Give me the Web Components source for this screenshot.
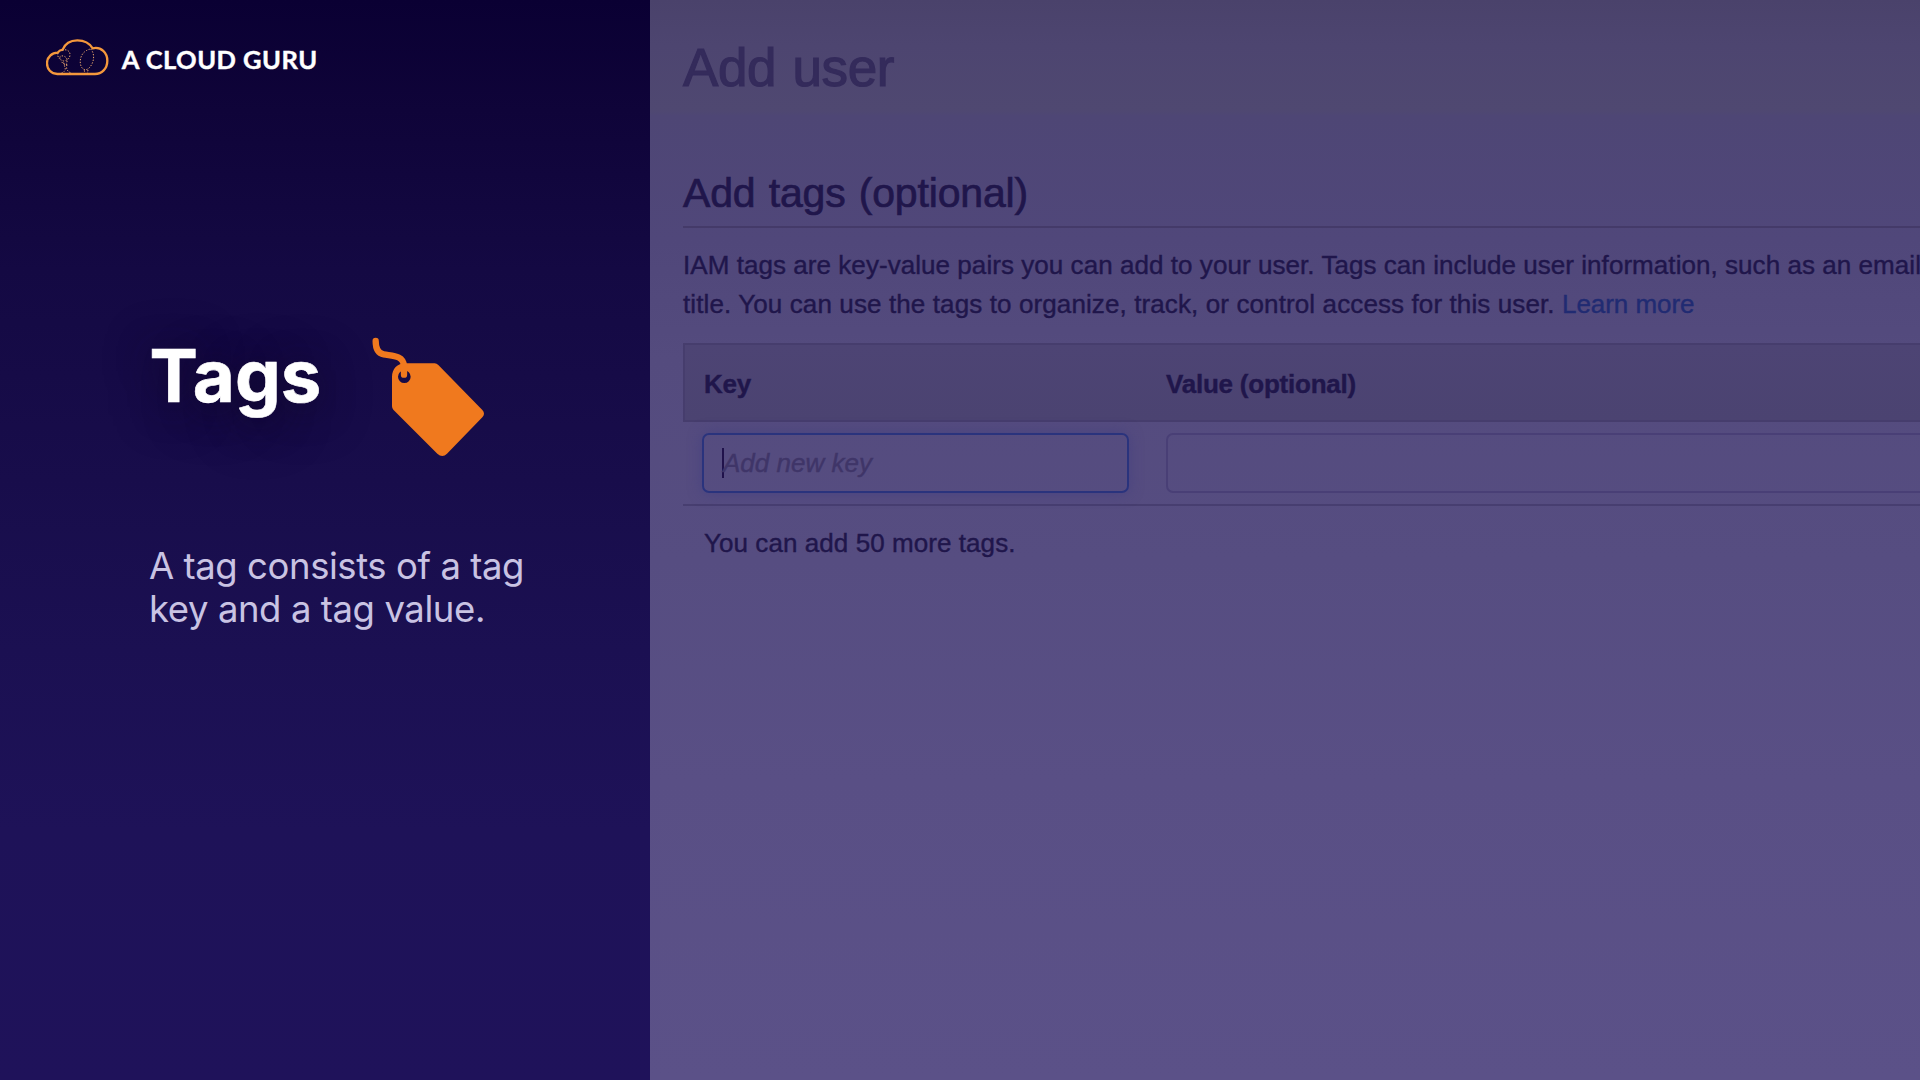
<!DOCTYPE html>
<html lang="en">
<head>
<meta charset="utf-8">
<title>Tags</title>
<style>
html,body{margin:0;height:100%;overflow:hidden;background:#150b46}
body{font-family:"Liberation Sans",Arial,sans-serif}
</style>
</head>
<body>
<lesson-slide>
  <lesson-panel slot="panel">
    <brand-logo slot="brand">A CLOUD GURU</brand-logo>
    <span slot="title"><text-line fit="172">Tags</text-line></span>
    <tag-icon slot="icon"></tag-icon>
    <text-line slot="copy" fit="375">A tag consists of a tag</text-line>
    <text-line slot="copy" fit="336">key and a tag value.</text-line>
  </lesson-panel>
  <user-console slot="stage"></user-console>
</lesson-slide>
<script>
/* A single line whose tracking is adjusted so that it spans `fit` pixels. */
class TextLine extends HTMLElement {
  connectedCallback() {
    if (this.shadowRoot) return;
    this.attachShadow({mode: 'open'}).innerHTML =
      '<style>:host{display:block;white-space:pre}span{display:inline-block}</style><span><slot></slot></span>';
    requestAnimationFrame(() => this.fit());
    this.fit();
  }
  fit() {
    const span = this.shadowRoot.querySelector('span');
    const want = parseFloat(this.getAttribute('fit'));
    const n = this.textContent.length;
    if (!want || !n) return;
    span.style.letterSpacing = '0px';
    const have = span.getBoundingClientRect().width;
    if (have) span.style.letterSpacing = ((want - have) / n).toFixed(3) + 'px';
  }
}

class LessonSlide extends HTMLElement {
  constructor() {
    super();
    this.attachShadow({mode: 'open'}).innerHTML = `
      <style>
        :host{display:grid;grid-template-columns:650px 1270px;width:1920px;height:1080px;overflow:hidden}
      </style>
      <slot name="panel"></slot><slot name="stage"></slot>`;
  }
}

class LessonPanel extends HTMLElement {
  constructor() {
    super();
    this.attachShadow({mode: 'open'}).innerHTML = `
      <style>
        :host{display:flex;flex-direction:column;box-sizing:border-box;height:1080px;
          background:linear-gradient(180deg,#0a0033 0,#0f0439 110px,#140943 270px,#180d4b 480px,#1b1052 650px,#1e1258 830px,#1f125a 1080px);
          font-family:Inter,"Liberation Sans",sans-serif}
        header{height:334px;padding:39px 0 0 46px;box-sizing:border-box}
        .head{display:flex;height:210px;padding-left:149px}
        .title{width:222px;margin-top:-2px;padding-left:.5px;box-sizing:border-box;font-weight:700;font-size:72.5px;line-height:88px;color:#fff;-webkit-text-stroke:.6px #fff;
          text-shadow:0 5px 34px rgba(20,10,42,.6),0 7px 50px rgba(20,10,42,.5)}
        .copy{padding:1px 0 0 149px;font-size:36.5px;line-height:43px;color:#c9c3e3}
      </style>
      <header><slot name="brand"></slot></header>
      <div class="head"><div class="title"><slot name="title"></slot></div><slot name="icon"></slot></div>
      <div class="copy"><slot name="copy"></slot></div>`;
  }
}

class BrandLogo extends HTMLElement {
  connectedCallback() {
    const name = this.textContent.trim();
    this.attachShadow({mode: 'open'}).innerHTML = `
      <style>
        :host{display:flex;align-items:flex-start;gap:13px;font:700 25.5px/38px Lato,"Liberation Sans",sans-serif;color:#fff;-webkit-text-stroke:.4px #fff}
        svg{display:block}
        text-line{margin-top:1px}
      </style>
      <svg width="62.67" height="36.67" viewBox="48 56 188 110" fill="none" stroke="#f4983c">
        <path stroke-width="7" stroke-linejoin="round" d="M82 161C63 161 51 146 51 129C51 110 66 97 83 97C87 91 92 89 98 88C105 70 122 60 142 60C162 60 179 69 188 84C214 78 232 98 232 121C232 145 215 161 195 161Z"/>
        <g stroke-width="3" stroke-dasharray="4 4.5" stroke="#eaa66c">
          <path d="M182 86C195 100 193 124 180 140C171 151 162 151 155 141C147 128 151 106 162 96Q171 88 182 86Z"/>
          <path d="M163 150L164 159M174 149L172 159"/>
          <path d="M97 91C108 84 121 92 120 104C119 115 112 120 101 122C94 120 88 115 90 109C98 103 109 109 112 118L109 134C101 132 95 127 93 120M84 98C81 107 86 114 93 119M111 133C107 145 112 155 126 159M101 127L106 146Q105 154 94 159"/>
        </g>
      </svg>
      <text-line fit="196">${name}</text-line>`;
  }
}

class TagIcon extends HTMLElement {
  constructor() {
    super();
    this.attachShadow({mode: 'open'}).innerHTML = `
      <style>:host{display:block;width:115px;height:121px}svg{display:block}</style>
      <svg width="113" height="122" viewBox="93 42 339 366" fill="none">
        <path fill="#f0791e" fill-rule="evenodd" d="M196 130H284Q290 130 295 135L427 270Q437 281 427 292L321 401Q307 415 292 401L160 269Q156 265 156 259V171C156 147 172 130 196 130ZM174 170A19 19 0 1 0 212 170A19 19 0 1 0 174 170Z"/>
        <path stroke="#f0791e" stroke-width="19" stroke-linecap="round" d="M107 63C107 86 113 100 131 103C156 108 189 105 192 137V164"/>
      </svg>`;
  }
}

class KeyField extends HTMLElement {
  constructor() {
    super();
    this.attachShadow({mode: 'open'}).innerHTML = `
      <style>
        :host{display:flex;align-items:center;box-sizing:border-box;height:60px;border:2px solid #493f76;border-radius:7px;padding-left:18px;
          font:italic 26px/36px "Liberation Sans",sans-serif;color:#3f3568}
        :host([focused]){border-color:#2a337d;box-shadow:0 0 14px rgba(64,60,128,.6)}
        i{display:none;width:2px;height:30px;background:#20124b;margin-right:-1px}
        :host([focused]) i{display:block}
      </style><i></i><slot></slot>`;
  }
}

class UserConsole extends HTMLElement {
  constructor() {
    super();
    this.attachShadow({mode: 'open'}).innerHTML = `
      <style>
        :host{display:block;box-sizing:border-box;height:1080px;overflow:hidden;padding:33px 0 0 33px;color:#20164b;-webkit-text-stroke:.4px;
          font:26px/39px "Liberation Sans",Arial,sans-serif;
          background:linear-gradient(180deg,#4a426b 0,#4d4570 45px,#4f4871 110px,#4e4675 116px,#50477a 240px,#544b7e 360px,#564d81 560px,#594f85 780px,#5b5188 1080px)}
        h1,h2{margin:0;font-weight:400}
        h1{font-size:53px;line-height:70px;color:#342b5b;-webkit-text-stroke:1.2px #342b5b;word-spacing:2px}
        h2{font-size:41px;line-height:50px;padding:65px 0 8px;border-bottom:2px solid #443a69;-webkit-text-stroke:.7px;word-spacing:2px}
        .intro{padding:18px 0 19px}
        .row{display:flex}
        .link{color:#212b72}
        .table{border-bottom:2px solid #473e70}
        .thead,.fields{display:grid}
        .thead{grid-template-columns:462px 1fr;box-sizing:border-box;height:79px;border:2px solid #463d6d;border-right:0;
          background:linear-gradient(#4d4474,#4b4371);font-weight:700;line-height:78px;padding-left:19px}
        .fields{grid-template-columns:427px 1fr;gap:37px;padding:11px 0 11px 19px}
        .fields key-field:last-child{width:800px}
        .note{padding:18px 0 0 21px}
      </style>
      <h1><text-line fit="211">Add user</text-line></h1>
      <h2><text-line fit="345">Add tags (optional)</text-line></h2>
      <div class="intro">
        <text-line fit="1238">IAM tags are key-value pairs you can add to your user. Tags can include user information, such as an email</text-line>
        <div class="row"><text-line fit="879">title. You can use the tags to organize, track, or control access for this user. </text-line><text-line class="link" fit="132.5">Learn more</text-line></div>
      </div>
      <div class="table">
        <div class="thead"><text-line fit="47">Key</text-line><text-line fit="190">Value (optional)</text-line></div>
        <div class="fields"><key-field focused><text-line fit="149">Add new key</text-line></key-field><key-field></key-field></div>
      </div>
      <div class="note"><text-line fit="311.5">You can add 50 more tags.</text-line></div>`;
  }
}

customElements.define('text-line', TextLine);
customElements.define('lesson-slide', LessonSlide);
customElements.define('lesson-panel', LessonPanel);
customElements.define('brand-logo', BrandLogo);
customElements.define('tag-icon', TagIcon);
customElements.define('key-field', KeyField);
customElements.define('user-console', UserConsole);
</script>
</body>
</html>
